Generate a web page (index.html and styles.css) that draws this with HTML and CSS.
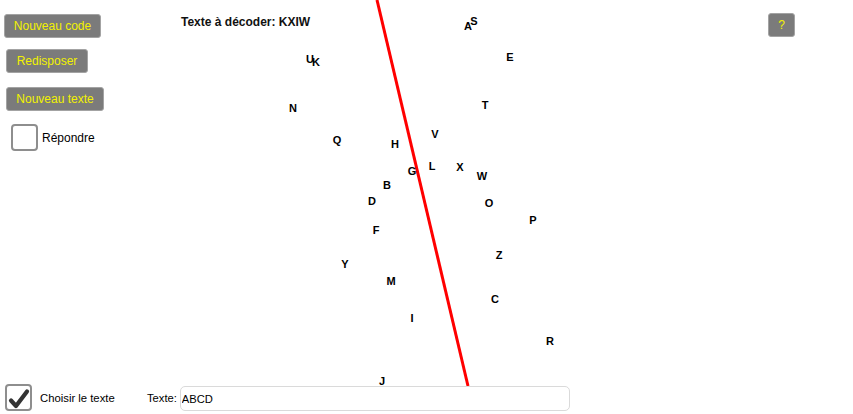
FILE: index.html
```html
<!DOCTYPE html>
<html lang="fr">
<head>
<meta charset="utf-8">
<title>Décodage</title>
<link rel="stylesheet" href="styles.css">
</head>
<body>
<div class="app">
  <div class="board">
    <svg class="stroke" width="853" height="414" viewBox="0 0 853 414">
      <line x1="377" y1="0" x2="468" y2="386" stroke="#ff0000" stroke-width="3"/>
    </svg>
    <span class="glyph" style="left:468px;top:26px">A</span>
    <span class="glyph" style="left:474px;top:21px">S</span>
    <span class="glyph" style="left:310px;top:59px">U</span>
    <span class="glyph" style="left:316px;top:62px">K</span>
    <span class="glyph" style="left:510px;top:57px">E</span>
    <span class="glyph" style="left:293px;top:108px">N</span>
    <span class="glyph" style="left:485px;top:105px">T</span>
    <span class="glyph" style="left:337px;top:140px">Q</span>
    <span class="glyph" style="left:395px;top:144px">H</span>
    <span class="glyph" style="left:435px;top:134px">V</span>
    <span class="glyph" style="left:432px;top:166px">L</span>
    <span class="glyph" style="left:460px;top:167px">X</span>
    <span class="glyph" style="left:482px;top:176px">W</span>
    <span class="glyph" style="left:412px;top:171px">G</span>
    <span class="glyph" style="left:387px;top:185px">B</span>
    <span class="glyph" style="left:372px;top:201px">D</span>
    <span class="glyph" style="left:489px;top:203px">O</span>
    <span class="glyph" style="left:533px;top:220px">P</span>
    <span class="glyph" style="left:376px;top:230px">F</span>
    <span class="glyph" style="left:499px;top:255px">Z</span>
    <span class="glyph" style="left:345px;top:264px">Y</span>
    <span class="glyph" style="left:391px;top:281px">M</span>
    <span class="glyph" style="left:495px;top:299px">C</span>
    <span class="glyph" style="left:412px;top:318px">I</span>
    <span class="glyph" style="left:550px;top:341px">R</span>
    <span class="glyph" style="left:382px;top:381px">J</span>
  </div>

  <div class="upper">
    <div class="sidebar">
      <button class="btn btn-code">Nouveau code</button>
      <button class="btn btn-redisp">Redisposer</button>
      <button class="btn btn-text">Nouveau texte</button>
      <label class="check-row respond">
        <span class="box"></span>
        <span class="check-label">Répondre</span>
      </label>
    </div>
    <div class="title-area">
      <div class="title">Texte à décoder: KXIW</div>
    </div>
    <button class="btn btn-help">?</button>
  </div>

  <div class="bottom">
    <label class="check-row choose">
      <span class="box">
        <svg width="27" height="27" viewBox="0 0 27 27">
          <polyline points="6,16.5 11,22 22,7.5" fill="none" stroke="#333333" stroke-width="4.2" stroke-linecap="round" stroke-linejoin="round"/>
        </svg>
      </span>
      <span class="check-label small">Choisir le texte</span>
    </label>
    <span class="field-label">Texte:</span>
    <input class="field" type="text" value="ABCD">
  </div>
</div>
</body>
</html>
```

FILE: styles.css
```css
* {
  box-sizing: border-box;
}

html, body {
  margin: 0;
  padding: 0;
  background: #ffffff;
}

body {
  font-family: "Liberation Sans", Arial, sans-serif;
  color: #000000;
}

.app {
  position: relative;
  width: 853px;
  height: 414px;
  display: flex;
  flex-direction: column;
  overflow: hidden;
}

.board {
  position: absolute;
  inset: 0;
  pointer-events: none;
  z-index: 0;
}

.stroke {
  position: absolute;
  left: 0;
  top: 0;
}

.glyph {
  position: absolute;
  transform: translate(-50%, -50%);
  font-size: 11px;
  font-weight: bold;
  line-height: 11px;
  color: #000000;
}

.upper {
  position: relative;
  z-index: 1;
  flex: 1;
  display: flex;
  align-items: flex-start;
}

.sidebar {
  width: 181px;
  padding: 14px 0 0 4px;
  display: flex;
  flex-direction: column;
  align-items: flex-start;
}

.btn {
  height: 24px;
  padding: 0;
  background: #7b7b7b;
  border: 1px solid #a3a3a3;
  border-radius: 3px;
  color: #f2f200;
  font-family: "Liberation Sans", Arial, sans-serif;
  font-size: 12px;
  line-height: 22px;
  white-space: nowrap;
  text-align: center;
  cursor: pointer;
}

.btn-code {
  width: 97px;
}

.btn-redisp {
  width: 82px;
  margin-top: 11px;
  margin-left: 2px;
}

.btn-text {
  width: 98px;
  margin-top: 14px;
  margin-left: 2px;
}

.check-row {
  display: flex;
  align-items: center;
  gap: 4px;
}

.respond {
  margin-top: 13px;
  margin-left: 7px;
}

.box {
  width: 27px;
  height: 27px;
  border: 2px solid #8e8e8e;
  border-radius: 4px;
  background: #ffffff;
  position: relative;
  flex: none;
}

.box svg {
  position: absolute;
  left: -2px;
  top: -2px;
}

.check-label {
  font-size: 12px;
}

.check-label.small {
  font-size: 11.3px;
}

.title-area {
  flex: 1;
  padding-top: 15px;
}

.title {
  font-size: 12px;
  font-weight: bold;
  line-height: 14px;
  color: #111111;
}

.btn-help {
  width: 27px;
  margin-top: 13px;
  margin-right: 58px;
}

.bottom {
  position: relative;
  z-index: 1;
  display: flex;
  align-items: center;
  padding: 0 0 3px 5px;
  height: 30px;
}

.choose {
  width: 142px;
  gap: 8px;
}

.field-label {
  font-size: 11.2px;
  margin-right: 3px;
}

.field {
  width: 390px;
  height: 25px;
  margin-top: 2px;
  border: 1px solid #dadada;
  border-radius: 5px;
  padding: 0 1px;
  font-family: "Liberation Sans", Arial, sans-serif;
  font-size: 11.2px;
  color: #000000;
  background: #ffffff;
  outline: none;
}
```
